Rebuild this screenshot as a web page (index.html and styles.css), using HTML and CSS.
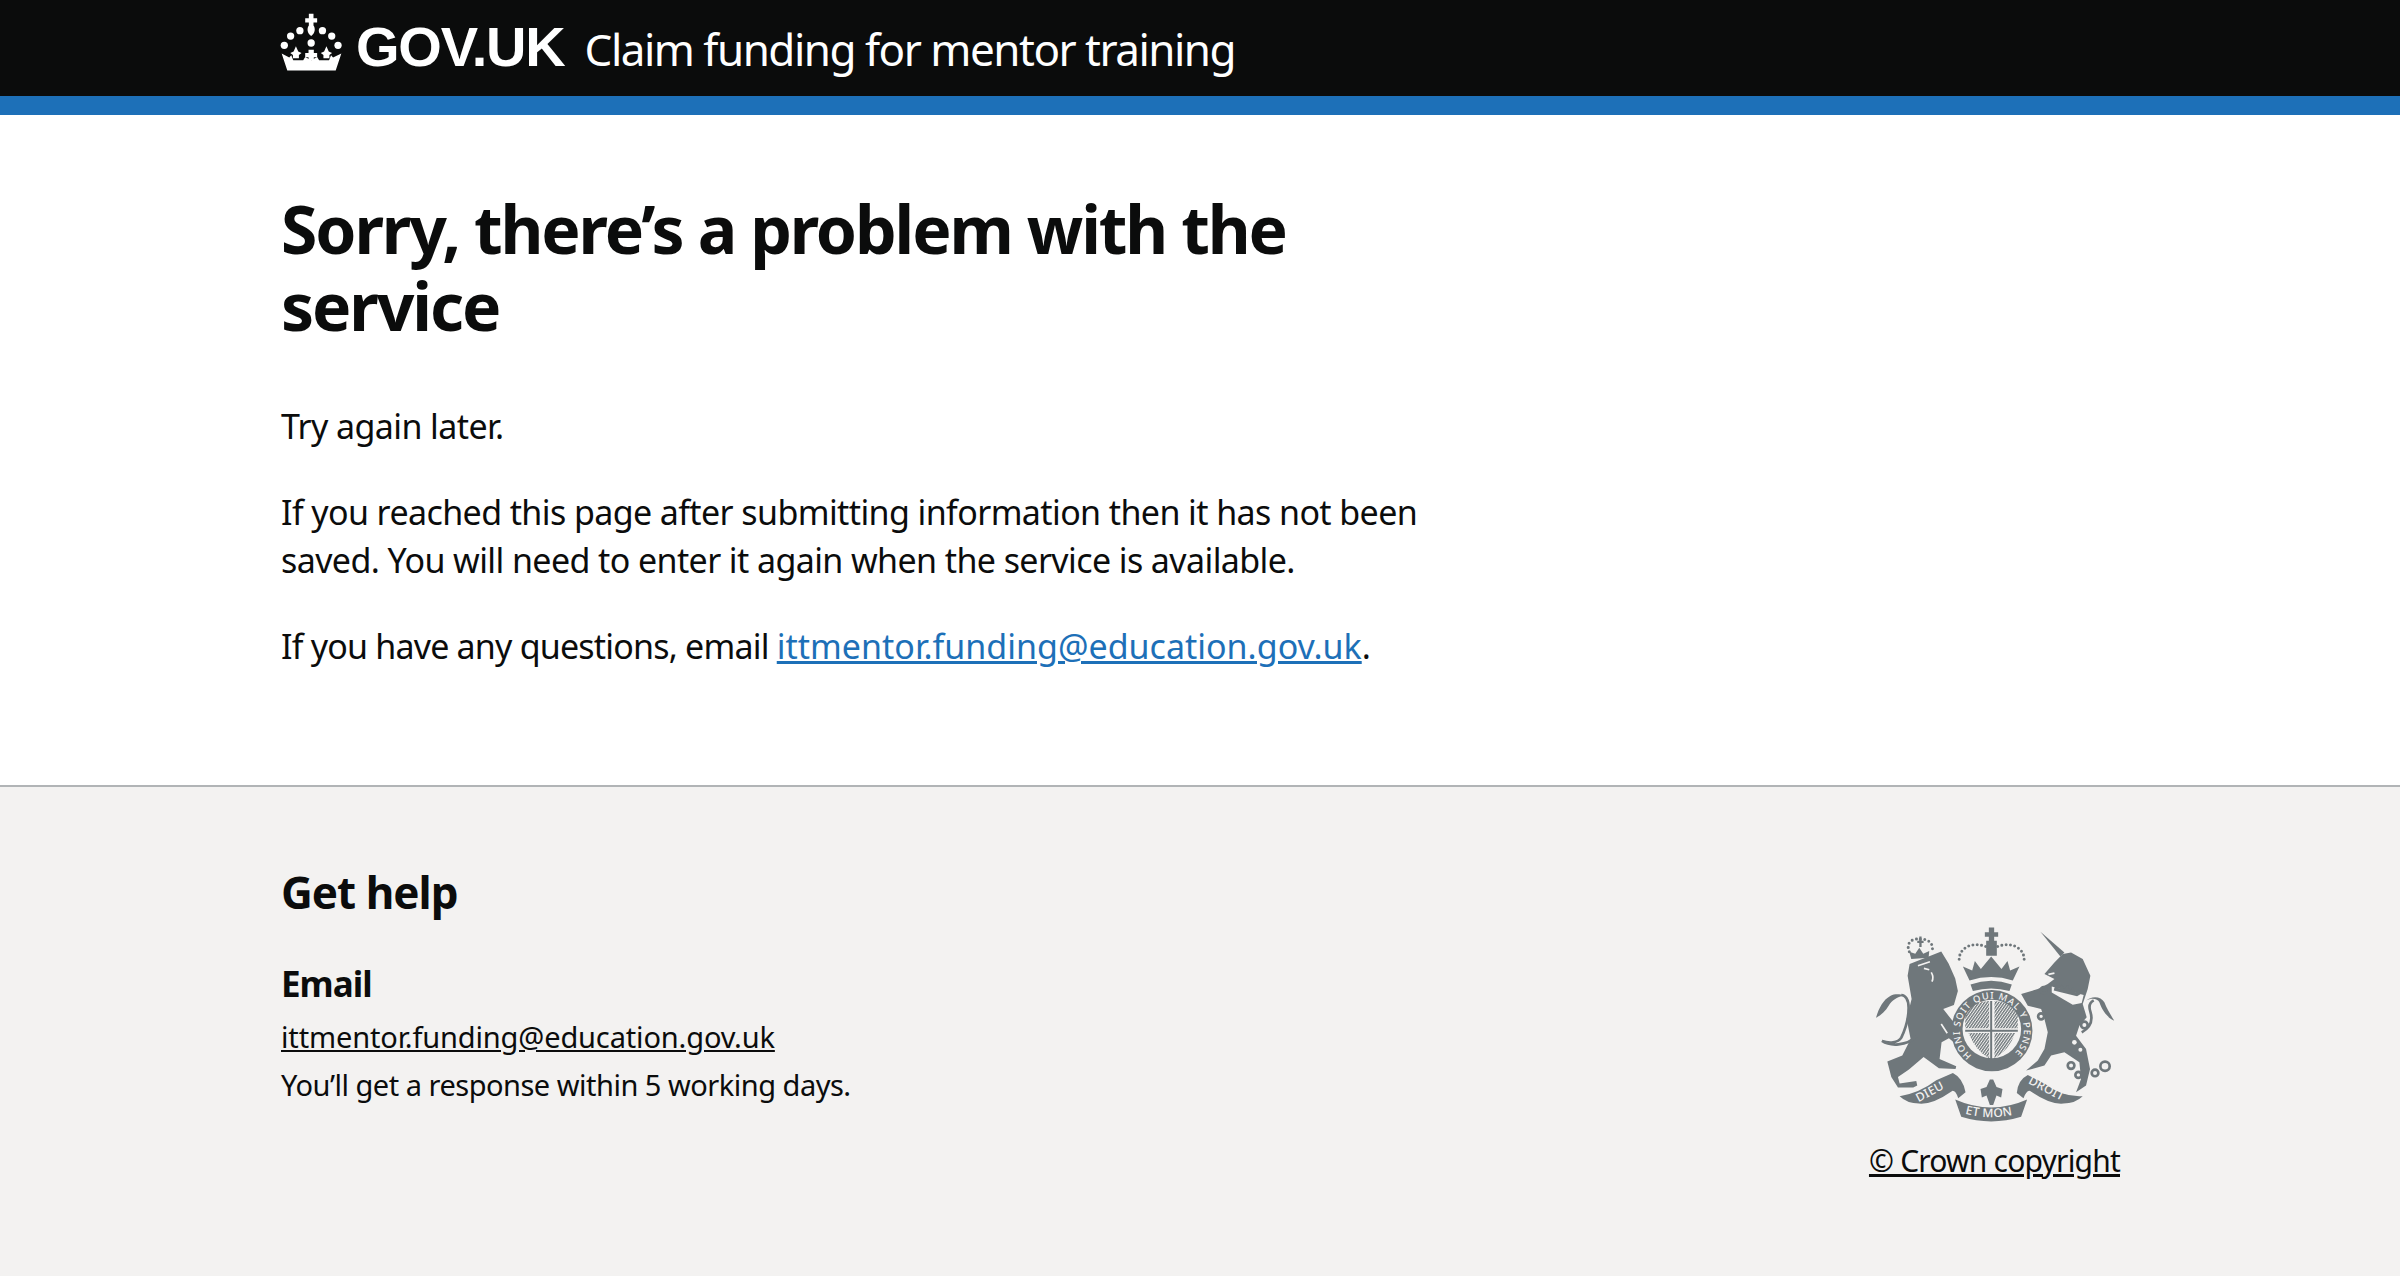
FILE: index.html
```html
<!DOCTYPE html>
<html lang="en">
<head>
    <meta charset="UTF-8">
    <meta name="viewport" content="width=device-width, initial-scale=1.0">
    <title>Sorry, there's a problem with the service - Claim funding for mentor training</title>
    <link rel="stylesheet" href="styles.css">
</head>
<body>
    <header class="site-header">
        <div class="width-container header-row">
            <a class="logo" href="#">
                <svg class="crown" viewBox="30 35 190 180" aria-hidden="true">
                    <path d="M117 40h14v13h11v13h-11v9c6 8 6 22 -7 32c-13 -10 -13 -24 -7 -32v-9h-11v-13h11z"/>
                    <circle cx="90" cy="91" r="11"/>
                    <circle cx="158" cy="91" r="11"/>
                    <circle cx="62" cy="107" r="11"/>
                    <circle cx="186" cy="107" r="11"/>
                    <circle cx="124" cy="128" r="11"/>
                    <circle cx="43" cy="135" r="11"/>
                    <circle cx="205" cy="135" r="11"/>
                    <path d="M35 160L58 172L64 165L70 180L100 180L106 170L124 180L142 170L148 180L178 180L184 165L190 172L215 160L198 211H52Z"/>
                    <path d="M78 138l7 16l10 4l-8 6v10h-18v-10l-8 -6l10 -4z"/>
                    <path d="M170 138l7 16l10 4l-8 6v10h-18v-10l-8 -6l10 -4z"/>
                    <path d="M116 148h16v10h10v13h-10v8h-16v-8h-10v-13h10z"/>
                </svg>
                <span class="logo-text">GOV.UK</span>
            </a>
            <a class="service-name" href="#">Claim funding for mentor training</a>
        </div>
    </header>
    <div class="header-stripe"></div>

    <main class="width-container main-wrapper">
        <div class="two-thirds">
            <h1 class="heading-l">Sorry, there’s a problem with the service</h1>
            <p class="body">Try again later.</p>
            <p class="body">If you reached this page after submitting information then it has not been saved. You will need to enter it again when the service is available.</p>
            <p class="body body-tight">If you have any questions, email <a class="link" href="#">ittmentor.funding@education.gov.uk</a>.</p>
        </div>
    </main>

    <footer class="site-footer">
        <div class="width-container footer-row">
            <div class="footer-help">
                <h2 class="heading-m">Get help</h2>
                <h3 class="heading-s">Email</h3>
                <p class="body-s"><a class="footer-link email-link" href="#">ittmentor.funding@education.gov.uk</a></p>
                <p class="body-s">You’ll get a response within 5 working days.</p>
            </div>
            <div class="footer-copyright">
                <svg class="arms" viewBox="95 45 730 600" aria-hidden="true">
                    <defs>
                        <pattern id="hatch" width="7" height="7" patternUnits="userSpaceOnUse" patternTransform="rotate(35)">
                            <rect width="4" height="7" fill="#6f777b"/>
                        </pattern>
                    </defs>
                    <g class="arms-fill">
                        <!-- lion -->
                        <path d="M205 165l95 -38l22 36l20 45l8 38l-12 42l-32 12l55 70l4 26l-20 10l-22 -18l-22 12l-6 50l50 22l-2 8l-50 -2l-46 -34l-44 38l-33 22l5 20l50 -8l3 14l-12 6h-46l-20 -32l-12 -46l45 -18l25 -50l-12 -60l15 -60l-12 -70z"/>
                        <path d="M104 326c10 -32 22 -54 44 -66c12 -6 28 -6 40 0c-22 4 -36 14 -46 30c-8 14 -22 28 -38 36z"/>
                        <!-- lion's crown -->
                        <path d="M210 150l-6 -22l18 6l12 -18l12 18l18 -8l-2 20z"/>
                        <path d="M228 95h6v-13h7v13h6v7h-6v12h-7v-12h-6z"/>
                        <!-- unicorn -->
                        <path d="M610 195l30 -35l25 -25l25 -5l35 20l23 50l-8 40l-15 45l12 40l-22 25l-10 30l30 40l12 60l-12 50l-30 20l15 -40l-5 -50l-45 -30l-40 10l-20 30l-55 15l35 -30l20 -35l10 -50l-10 -40l-10 -30l-40 -10l-20 -35l50 -15l30 -15l20 -15z"/>
                        <path d="M598 68l72 62l-12 12z"/>
                        <path d="M820 335c-15 -5 -35 -25 -45 -55c-5 -12 -25 -15 -40 -5c15 -15 45 -15 55 5c8 20 20 40 30 55z"/>
                        <!-- big crown -->
                        <path d="M365 172l28 12l8 -28l18 24l31 -38l31 38l18 -24l8 28l28 -12l-20 42q-65 -20 -130 0z"/>
                        <path d="M388 226q62 -22 124 0l-7 20q-55 -16 -110 0z"/>
                        <path d="M443 55h16v14h12v14h-12v12h8v45h-32v-45h8v-12h-12v-14h12z"/>
                        <!-- garter -->
                        <circle cx="452" cy="365" r="122"/>
                        <!-- ribbons -->
                        <path d="M175 562q60 -10 110 -48l50 -22q30 15 38 58l-22 18q-8 -24 -18 -22q-60 42 -100 38q-35 0 -58 -22z"/>
                        <path d="M725 562q-60 4 -115 -38l-50 -26q-30 15 -33 54l20 16q10 -26 20 -22q60 42 100 38q35 0 58 -22z"/>
                        <path d="M342 572q108 48 216 0l-18 52q-90 28 -180 0z"/>
                        <!-- fleur -->
                        <path d="M446 512h10l10 22l18 6l-4 26l-14 -6l-10 28h-10l-10 -28l-14 6l-4 -26l18 -6z"/>
                    </g>
                    <g class="arms-bg">
                        <circle cx="452" cy="360" r="88"/>
                        <path d="M632 232L728 258L722 282L695 287L632 250z"/>
                        <circle cx="700" cy="400" r="7"/>
                        <circle cx="718" cy="422" r="6"/>
                    </g>
                    <g class="arms-cut">
                        <path d="M230 170l36 -12M248 178l16 4M270 190c6 10 6 20 2 28"/>
                        <path d="M622 196l18 -4M300 345l18 28"/>
                    </g>
                    <g class="arms-fill">
                        <path d="M640 236l6 -10l8 12l8 -12l8 14l10 -12l6 16l10 -10l6 16l12 -8l4 14l-10 6l-70 -18z"/>
                        <path d="M372 296q35 -18 72 -20v82h-72z" fill="url(#hatch)"/>
                        <path d="M460 276q37 2 70 20v62h-70z" fill="url(#hatch)"/>
                        <path d="M382 372h62v76q-42 -24 -62 -76z" fill="url(#hatch)"/>
                        <path d="M460 372h62q-18 52 -62 76z" fill="url(#hatch)"/>
                        <path d="M447 276h6v180h-6zM372 362h158v6h-158z"/>
                    </g>
                    <g class="arms-line">
                        <path d="M226 382c-30 30 -80 30 -104 14c22 8 48 6 58 -10c12 -25 22 -50 22 -90c0 -25 -10 -38 -22 -38"/>
                        <path d="M722 370c22 -12 36 -30 26 -62c-6 -18 -2 -28 10 -34"/>
                        <circle cx="690" cy="470" r="10"/>
                        <circle cx="712" cy="498" r="9"/>
                        <circle cx="762" cy="492" r="10"/>
                        <circle cx="792" cy="472" r="14"/>
                        <circle cx="608" cy="243" r="9"/>
                        <circle cx="600" cy="322" r="9"/>
                        <circle cx="730" cy="348" r="10"/>
                        <path class="beads" d="M445 118C405 92 345 112 355 162"/>
                        <path class="beads" d="M458 118C498 92 558 112 548 162"/>
                        <path class="beads" d="M204 128C190 95 225 85 232 92C245 85 282 95 272 128"/>
                    </g>
                    <g class="motto">
                        <path id="garter-ring" d="M392 440A96 96 0 1 1 512 440" fill="none"/>
                        <text class="garter-text"><textPath href="#garter-ring" textLength="462">HONI SOIT QUI MAL Y PENSE</textPath></text>
                        <path id="ribbon-mid" d="M362 612q90 26 176 0" fill="none"/>
                        <text><textPath href="#ribbon-mid" startOffset="10">ET MON</textPath></text>
                        <text x="232" y="580" transform="rotate(-28 232 580)">DIEU</text>
                        <text x="560" y="522" transform="rotate(28 560 522)">DROIT</text>
                    </g>
                </svg>
                <a class="footer-link copyright-link" href="#">© Crown copyright</a>
            </div>
        </div>
    </footer>
</body>
</html>
```

FILE: styles.css
```css
* {
    box-sizing: border-box;
}

body {
    margin: 0;
    background-color: #fff;
    color: #0b0c0c;
    font-family: "Noto Sans", "Liberation Sans", sans-serif;
}

.width-container {
    width: 1840px;
    margin: 0 auto;
}

/* header */
.site-header {
    height: 96px;
    background-color: #0b0c0c;
}

.header-row {
    display: flex;
    align-items: baseline;
    padding-top: 12px;
    color: #fff;
}

.header-row a {
    color: #fff;
    text-decoration: none;
}

.logo {
    display: flex;
    align-items: baseline;
    gap: 13px;
    margin-right: 20px;
}

.crown {
    width: 63px;
    height: 60px;
    fill: #fff;
    align-self: flex-start;
}

.logo-text {
    font-family: "Liberation Sans", sans-serif;
    font-size: 56px;
    font-weight: 700;
    line-height: 70px;
    letter-spacing: -1.2px;
}

.service-name {
    font-size: 44px;
    line-height: 72px;
    letter-spacing: -1.5px;
}

.header-stripe {
    height: 19px;
    background-color: #1d70b8;
}

/* main */
.main-wrapper {
    height: 670px;
    padding: 75px 0 0 1px;
}

.two-thirds {
    width: 1200px;
}

.heading-l {
    margin: 0 0 58px;
    font-size: 66px;
    font-weight: 700;
    line-height: 77px;
    letter-spacing: -2.1px;
}

.body {
    margin: 0 0 38px;
    font-size: 34px;
    line-height: 48px;
    letter-spacing: -0.6px;
}

.body-tight {
    letter-spacing: -0.8px;
}

.link {
    color: #1d70b8;
    letter-spacing: 0;
}

/* footer */
.site-footer {
    height: 491px;
    padding-top: 75px;
    background-color: #f3f2f1;
    border-top: 2px solid #b1b4b6;
}

.footer-row {
    display: flex;
    justify-content: space-between;
}

.footer-help {
    padding-left: 1px;
}

.heading-m {
    margin: 0 0 38px;
    font-size: 44px;
    font-weight: 700;
    line-height: 60px;
    letter-spacing: -1px;
}

.heading-s {
    margin: 0 0 5px;
    font-size: 35px;
    font-weight: 700;
    line-height: 48px;
    letter-spacing: -1px;
}

.body-s {
    margin: 0;
    font-size: 29px;
    line-height: 48px;
    letter-spacing: -0.5px;
}

.footer-link {
    color: #0b0c0c;
}

.email-link {
    letter-spacing: -0.15px;
}

.footer-copyright {
    display: flex;
    flex-direction: column;
    align-items: center;
    padding-top: 62px;
    font-size: 30px;
    letter-spacing: -0.8px;
}

.arms {
    width: 243px;
    height: 200px;
    margin-bottom: 16px;
}

.arms-fill {
    fill: #6f777b;
}

.arms-bg {
    fill: #f3f2f1;
}

.arms-cut {
    fill: none;
    stroke: #f3f2f1;
    stroke-width: 5;
}

.arms-line {
    fill: none;
    stroke: #6f777b;
    stroke-width: 8;
}

.beads {
    stroke-width: 9;
    stroke-linecap: round;
    stroke-dasharray: 0 13;
}

.motto text {
    fill: #f3f2f1;
    font-size: 36px;
    font-weight: 500;
    letter-spacing: 1px;
}

.motto .garter-text {
    font-size: 28px;
}
```
